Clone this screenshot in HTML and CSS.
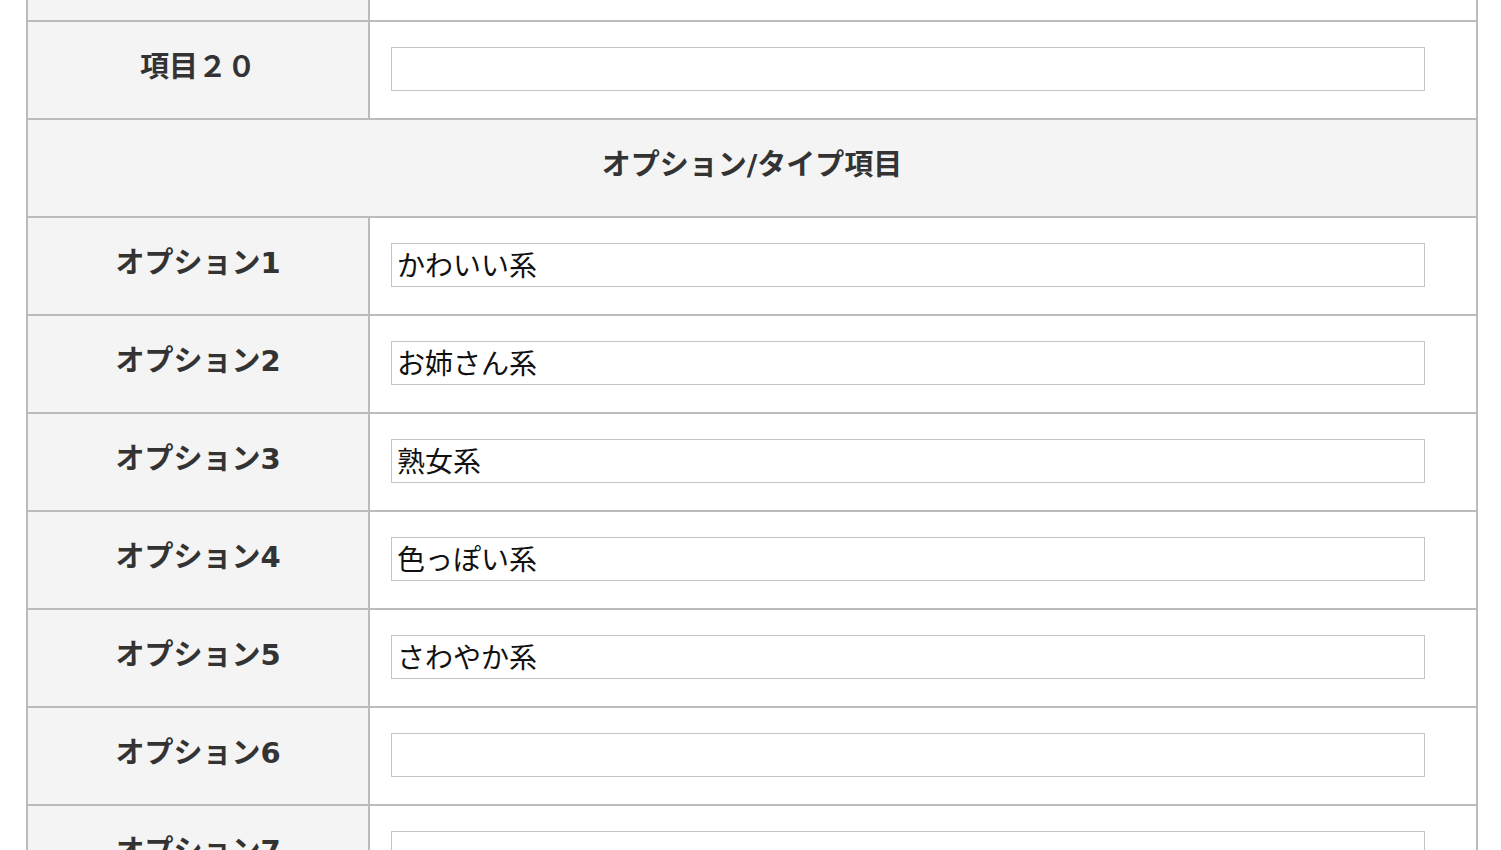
FILE: index.html
```html
<!DOCTYPE html>
<html lang="ja">
<head>
  <meta charset="UTF-8">
  <meta name="viewport" content="width=device-width, initial-scale=1.0">
  <title>項目設定</title>
  <link rel="stylesheet" href="styles.css">
</head>
<body>
  <table class="item-table">
    <!-- 通常項目 -->
    <tr>
      <th>項目１９</th>
      <td><input type="text" class="item-input" name="item19"></td>
    </tr>
    <tr>
      <th>項目２０</th>
      <td><input type="text" class="item-input" name="item20"></td>
    </tr>

    <!-- オプション/タイプ項目 -->
    <tr>
      <th colspan="2" class="section-head">オプション/タイプ項目</th>
    </tr>
    <tr>
      <th>オプション1</th>
      <td><input type="text" class="item-input" name="option1" value="かわいい系"></td>
    </tr>
    <tr>
      <th>オプション2</th>
      <td><input type="text" class="item-input" name="option2" value="お姉さん系"></td>
    </tr>
    <tr>
      <th>オプション3</th>
      <td><input type="text" class="item-input" name="option3" value="熟女系"></td>
    </tr>
    <tr>
      <th>オプション4</th>
      <td><input type="text" class="item-input" name="option4" value="色っぽい系"></td>
    </tr>
    <tr>
      <th>オプション5</th>
      <td><input type="text" class="item-input" name="option5" value="さわやか系"></td>
    </tr>
    <tr>
      <th>オプション6</th>
      <td><input type="text" class="item-input" name="option6"></td>
    </tr>
    <tr>
      <th>オプション7</th>
      <td><input type="text" class="item-input" name="option7"></td>
    </tr>
    <tr>
      <th>オプション8</th>
      <td><input type="text" class="item-input" name="option8"></td>
    </tr>
  </table>
</body>
</html>
```

FILE: styles.css
```css
body {
  margin: 0;
  background-color: #fff;
  color: #333;
  font-family: "DejaVu Sans", "Noto Sans CJK JP", sans-serif;
}
.item-table {
  width: 1452px;
  margin: -78px 0 0 26px;
  border-collapse: separate;
  border-spacing: 0;
  border-top: 2px solid #bbb;
  border-left: 2px solid #bbb;
}
.item-table th,
.item-table td {
  border-right: 2px solid #bbb;
  border-bottom: 2px solid #bbb;
  box-sizing: content-box;
}
.item-table th {
  width: 340px;
  height: 90px;
  padding: 0 0 6px;
  background-color: #f4f4f4;
  font-size: 29px;
  line-height: 1.2;
  font-weight: bold;
  text-align: center;
  color: #333;
}
.item-table td {
  height: 94px;
  padding: 0 51px 2px 21px;
  background-color: #fff;
}
.section-head {
  width: auto;
}
.item-input {
  display: block;
  width: 100%;
  height: 44px;
  box-sizing: border-box;
  padding: 0 5px 3px;
  border: 1px solid #c4c4c4;
  border-radius: 0;
  background-color: #fff;
  color: #111;
  font-family: "Noto Sans CJK JP", sans-serif;
  font-size: 28px;
  outline: none;
}
```
